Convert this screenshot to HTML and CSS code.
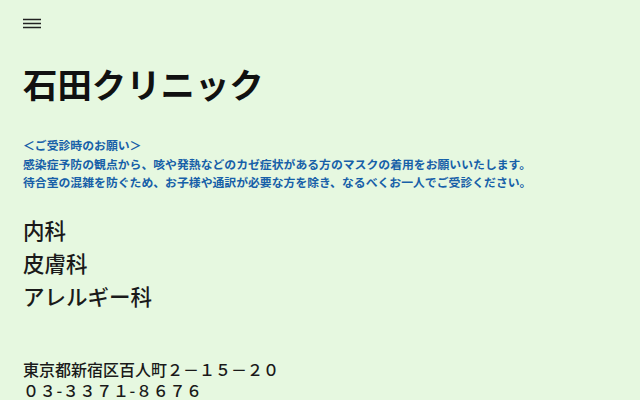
FILE: index.html
```html
<!DOCTYPE html>
<html lang="ja">
<head>
<meta charset="utf-8">
<link rel="stylesheet" href="styles.css">
</head>
<body>
<div class="page">
  <header class="top">
    <svg class="menu" width="18" height="12" viewBox="0 0 18 12"><path d="M0 1.5H18M0 5.5H18M0 9.5H18" stroke="#222" stroke-width="1.6"/></svg>
  </header>
  <h1 class="title">石田クリニック</h1>
  <div class="notice">
    <p>＜ご受診時のお願い＞</p>
    <p>感染症予防の観点から、咳や発熱などのカゼ症状がある方のマスクの着用をお願いいたします。</p>
    <p>待合室の混雑を防ぐため、お子様や通訳が必要な方を除き、なるべくお一人でご受診ください。</p>
  </div>
  <ul class="depts">
    <li>内科</li>
    <li>皮膚科</li>
    <li>アレルギー科</li>
  </ul>
  <div class="addr">
    <p>東京都新宿区百人町２－１５－２０</p>
    <p class="tel">０３-３３７１-８６７６</p>
  </div>
</div>
</body>
</html>
```
FILE: styles.css
```css
html, body {
  margin: 0;
  padding: 0;
  background: #e6f8e0;
}
body {
  font-family: "Noto Sans CJK JP", "Noto Sans", sans-serif;
  color: #1a1a1a;
}
.page {
  padding: 0 23px;
}
.top {
  height: 44px;
  display: flex;
  align-items: flex-start;
  padding-top: 18px;
  box-sizing: border-box;
}
.menu {
  display: block;
}
.title {
  margin: 13px 0 0;
  font-size: 34.4px;
  line-height: 52px;
  font-weight: 700;
  color: #111;
}
.notice {
  margin-top: 27px;
  color: #1760a8;
  font-size: 11.85px;
  font-weight: 700;
  line-height: 18.5px;
}
.notice p {
  margin: 0;
}
.depts {
  list-style: none;
  margin: 21px 0 0;
  padding: 0;
  font-size: 21.5px;
  line-height: 33px;
  font-weight: 500;
  color: #1a1a1a;
}
.addr {
  margin-top: 47px;
  font-size: 16px;
  line-height: 21.5px;
  font-weight: 500;
}
.addr p {
  margin: 0;
}
.tel {
  letter-spacing: 0.7px;
}
```
